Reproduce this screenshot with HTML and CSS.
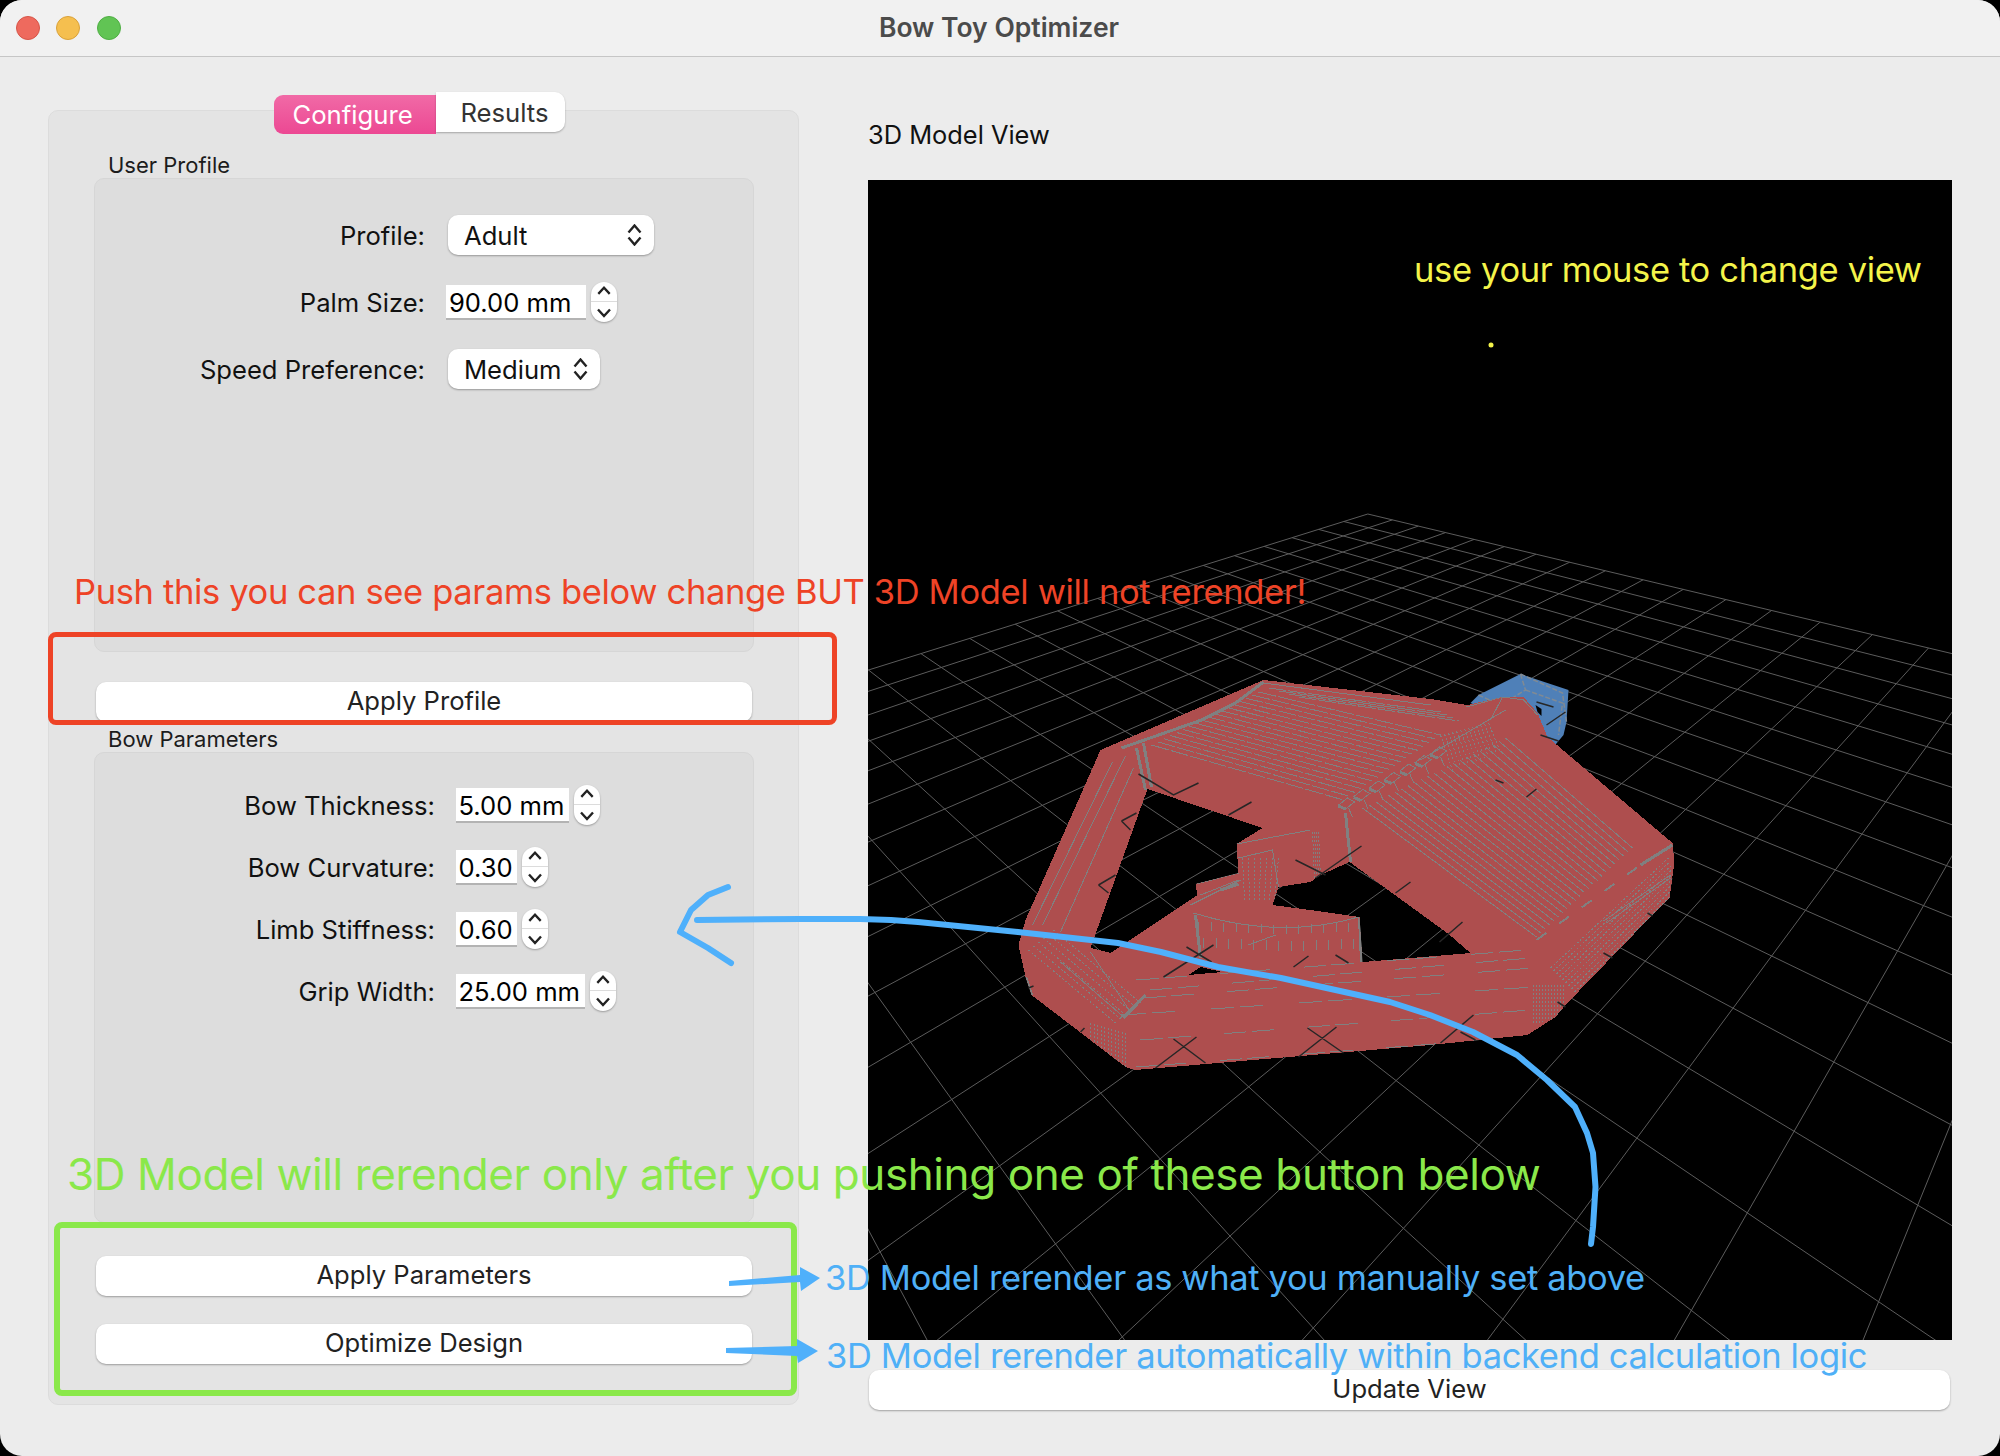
FILE: index.html
```html
<!DOCTYPE html>
<html lang="en">
<head>
<meta charset="utf-8">
<title>Bow Toy Optimizer</title>
<link rel="stylesheet" href="styles.css">
</head>
<body>
<div class="window">
  <header class="titlebar">
    <div class="lights"><i class="light red"></i><i class="light amber"></i><i class="light green"></i></div>
    <div class="title">Bow Toy Optimizer</div>
    <div></div>
  </header>
  <main class="content">
    <section class="left">
      <div class="tabs"><div class="tab tab-on">Configure</div><div class="tab tab-off">Results</div></div>
      <div class="pane">
        <div class="group-title">User Profile</div>
        <div class="group group-profile">
          <div class="form form-a">
            <label>Profile:</label>
            <div class="combo combo-wide"><span>Adult</span><svg class="updown" viewBox="0 0 15 22"><path d="M1.500 8.500 7.500 1.500 13.500 8.500M1.500 13.500 7.500 20.500 13.500 13.500"/></svg></div>
            <label>Palm Size:</label>
            <div class="spin"><div class="input w-palm">90.00 mm</div><div class="stepper"><svg viewBox="0 0 26 20"><path d="M7 12.500 13 6 19 12.500"/></svg><svg viewBox="0 0 26 20"><path d="M7 7.500 13 14 19 7.500"/></svg></div></div>
            <label>Speed Preference:</label>
            <div class="combo combo-narrow"><span>Medium</span><svg class="updown" viewBox="0 0 15 22"><path d="M1.500 8.500 7.500 1.500 13.500 8.500M1.500 13.500 7.500 20.500 13.500 13.500"/></svg></div>
          </div>
        </div>
        <button class="btn btn-profile">Apply Profile</button>
        <div class="group-title title-bow">Bow Parameters</div>
        <div class="group group-bow">
          <div class="form form-b">
            <label>Bow Thickness:</label>
            <div class="spin"><div class="input w-thick">5.00 mm</div><div class="stepper"><svg viewBox="0 0 26 20"><path d="M7 12.500 13 6 19 12.500"/></svg><svg viewBox="0 0 26 20"><path d="M7 7.500 13 14 19 7.500"/></svg></div></div>
            <label>Bow Curvature:</label>
            <div class="spin"><div class="input w-small">0.30</div><div class="stepper"><svg viewBox="0 0 26 20"><path d="M7 12.500 13 6 19 12.500"/></svg><svg viewBox="0 0 26 20"><path d="M7 7.500 13 14 19 7.500"/></svg></div></div>
            <label>Limb Stiffness:</label>
            <div class="spin"><div class="input w-small">0.60</div><div class="stepper"><svg viewBox="0 0 26 20"><path d="M7 12.500 13 6 19 12.500"/></svg><svg viewBox="0 0 26 20"><path d="M7 7.500 13 14 19 7.500"/></svg></div></div>
            <label>Grip Width:</label>
            <div class="spin"><div class="input w-grip">25.00 mm</div><div class="stepper"><svg viewBox="0 0 26 20"><path d="M7 12.500 13 6 19 12.500"/></svg><svg viewBox="0 0 26 20"><path d="M7 7.500 13 14 19 7.500"/></svg></div></div>
          </div>
        </div>
        <button class="btn btn-params">Apply Parameters</button>
        <button class="btn btn-opt">Optimize Design</button>
      </div>
    </section>
    <section class="right">
      <div class="view-title">3D Model View</div>
      <div class="viewport">
        <svg id="scene" class="scene" viewBox="868 180 1083 1160">
          <defs><clipPath id="meshclip"><path id="meshclip-path" clip-rule="evenodd"/></clipPath></defs>
          <path id="grid" class="grid"/>
          <path class="box" d="M1470 703 1478 695 1520 674 1568 690 1566 722 1563 735 1553 747 1530 730Z"/>
          <path class="box-line" d="M1478 695 1500 705M1520 674 1525 690 1500 705M1525 690 1562 703 1558 735M1520 674 1562 693 1566 722"/>
          <path class="notch" d="M1535 705 1541 709 1541 716 1537 712Z"/>
          <path id="mesh" class="mesh"/>
          <g clip-path="url(#meshclip)"><path id="fine" class="fine"/><path id="dash" class="dash"/><path id="dots" class="dots"/><path id="thick" class="thick"/><path id="chunks" class="chunks"/></g>
          <path class="marks" d="M1138 774 1173 795 1198 783M1228 815 1251 802M1121 821 1136 813M1121 821 1130 830M1098 885 1115 875M1098 885 1108 893M1295 860 1325 875M1315 878 1361 846M1163 977 1213 945M1186 947 1211 962M1293 967 1308 956M1335 955 1348 963M1155 1068 1196 1037M1173 1039 1205 1063M1298 1057 1336 1027M1307 1028 1343 1053M1028 988 1033 986M1080 1032 1084 1028M1536 702 1553 707M1546 725 1565 712M1540 735 1558 741M1526 797 1536 789M1647 913 1652 916M1495 780 1503 783M1440 1043 1473 1015M1460 1032 1475 1040M1603 953 1612 958M1557 1002 1565 1007M1410 882 1395 893M1462 922 1439 942"/>
        </svg>
      </div>
      <button class="btn btn-update">Update View</button>
    </section>
  </main>

  <div class="note note-red">Push this you can see params below change BUT 3D Model will not rerender!</div>
  <div class="note note-green">3D Model will rerender only after you pushing one of these button below</div>
  <div class="note note-blue-a">3D Model rerender as what you manually set above</div>
  <div class="note note-blue-b">3D Model rerender automatically within backend calculation logic</div>
  <div class="note note-yellow">use your mouse to change view</div>
  <div class="frame frame-red"></div>
  <div class="frame frame-green"></div>
  <svg class="ink" viewBox="0 0 2000 1456">
    <circle class="ink-dot" cx="1491" cy="345" r="2.500"/>
    <path class="ink-line" d="M1591 1244 1593 1227 1595.500 1187 1593 1153 1587 1133 1575 1107 1547 1080 1517 1055 1473 1032 1430 1015 1390 1002 1281 978 1218 967 1161 952 1118 943 1018 932 918 922 891 920 860 919 800 919 697 920"/>
    <path class="ink-line" d="M728 887 708 895 691 910 680 932 708 948 731 963"/>
    <path class="ink-fill" d="M729 1281 800 1275 800 1267 820 1278 801 1291 800 1282 729 1286Z"/>
    <path class="ink-fill" d="M726 1348 797 1346 797 1339 818 1351 798 1363 797 1356 726 1353Z"/>
  </svg>
</div>
<script src="scene.js"></script>
</body>
</html>
```
FILE: styles.css
```css
* { box-sizing: border-box; }
html, body { margin: 0; padding: 0; background: #000; }
body { width: 2000px; height: 1456px; overflow: hidden; font-family: Inter, "Noto Sans", "Liberation Sans", sans-serif; color: #1c1c1c; }
.window { position: relative; width: 2000px; height: 1456px; background: #ececec; border-radius: 22px; overflow: hidden; display: flex; flex-direction: column; }

.titlebar { flex: none; height: 57px; display: grid; grid-template-columns: 1fr auto 1fr; align-items: center; background: #f1f1f1; border-bottom: 1px solid #c6c6c6; }
.lights { display: flex; gap: 16.500px; padding-left: 15.500px; }
.light { width: 24px; height: 24px; border-radius: 50%; display: block; }
.red { background: #ee6a5e; border: 1px solid #d65548; }
.amber { background: #f5bf4f; border: 1px solid #d9a13a; }
.green { background: #61c454; border: 1px solid #4fae44; }
.title { font-size: 26.500px; font-weight: 600; color: #4b4b4b; transform: translate(-1px, -1px); }

.content { flex: 1; display: flex; min-height: 0; }
.left { width: 799px; padding: 35px 0 0 48px; flex: none; }
.tabs { position: relative; z-index: 1; display: flex; align-items: flex-start; justify-content: center; height: 42px; margin-bottom: -24px; padding-right: 8px; font-size: 25.700px; }
.tab { display: flex; align-items: center; justify-content: center; }
.tab-on { width: 162px; height: 39px; margin-top: 3px; padding-right: 5px; color: #fff; background: linear-gradient(#f16aa6, #ec4893); border-radius: 9px 0 0 9px; }
.tab-off { width: 129px; height: 40px; padding-left: 8px; background: #fff; color: #333; border-radius: 0 10px 10px 0; box-shadow: 0 1px 2px rgba(0,0,0,.28); }
.pane { height: 1295px; padding: 42px 44px 0 45px; background: #e4e4e4; border: 1px solid #dcdcdc; border-radius: 10px; }
.group-title { height: 25px; line-height: 25px; padding-left: 14px; font-size: 22px; color: #1c1c1c; }
.title-bow { margin-top: 5px; }
.group { background: #dddddd; border: 1px solid #d6d6d6; border-radius: 10px; }
.group-profile { height: 474px; padding-top: 36px; }
.group-bow { height: 471px; padding-top: 32px; }
.form { display: grid; align-items: center; justify-items: start; }
.form label { justify-self: end; font-size: 25.600px; color: #111; }
.form-a { grid-template-columns: 330px auto; column-gap: 21px; row-gap: 27px; grid-auto-rows: 40px; }
.form-b { grid-template-columns: 340px auto; column-gap: 20.500px; row-gap: 22px; grid-auto-rows: 40px; }
.combo { display: flex; align-items: center; justify-content: space-between; height: 40px; margin-left: 2px; padding: 0 12px 0 16px; background: #fff; border-radius: 10px; box-shadow: 0 1px 2px rgba(0,0,0,.32); font-size: 25.600px; color: #111; }
.combo-wide { width: 206px; }
.combo-narrow { width: 152px; }
.updown { width: 15px; height: 22px; flex: none; }
.updown path, .stepper path { fill: none; stroke: #222; stroke-width: 2.400; }
.spin { display: flex; align-items: center; gap: 5px; }
.input { height: 35px; line-height: 35px; padding-left: 3px; background: #fff; border-bottom: 2px solid #b3b3b3; font-size: 25.600px; color: #000; white-space: nowrap; }
.w-palm { width: 140px; }
.w-thick { width: 113px; }
.w-small { width: 61px; }
.w-grip { width: 129px; }
.stepper { width: 26px; height: 40px; display: flex; flex-direction: column; background: #fff; border-radius: 13px; box-shadow: 0 1px 2px rgba(0,0,0,.3); overflow: hidden; }
.stepper svg { width: 26px; height: 20px; display: block; }
.stepper svg:first-child { border-bottom: 1px solid #dcdcdc; }

.btn { display: block; height: 40px; padding: 0 0 3px; border: 0; background: #fff; border-radius: 10px; box-shadow: 0 1px 2px rgba(0,0,0,.32); font: inherit; font-size: 25.600px; color: #222; }
.btn-profile { width: 656px; margin: 30px 0 0 2px; }
.btn-params { width: 656px; margin: 33px 0 0 2px; }
.btn-opt { width: 656px; margin: 28px 0 0 2px; }

.right { flex: 1; padding: 63px 48px 0 69px; display: flex; flex-direction: column; }
.view-title { height: 30px; line-height: 30px; margin-bottom: 30px; font-size: 25.400px; color: #111; }
.viewport { height: 1160px; background: #000; overflow: hidden; }
.scene { display: block; width: 100%; height: 100%; }
.btn-update { width: 1081px; margin: 30px 0 0 1px; flex: none; }

.grid { fill: none; stroke: #5c5c5c; stroke-width: 1; }
.box { fill: #4f80b8; }
.box-line { fill: none; stroke: #808a94; stroke-width: 1.500; stroke-dasharray: 5 2; }
.notch { fill: #000; }
.mesh { fill: #ae4e4e; fill-rule: evenodd; shape-rendering: crispEdges; }
.fine { fill: none; stroke: #808080; stroke-width: 1; shape-rendering: crispEdges; }
.dash { fill: none; stroke: #808080; stroke-width: 1; stroke-dasharray: 18 2; shape-rendering: crispEdges; }
.dots { fill: none; stroke: #808080; stroke-width: 1; stroke-dasharray: 2 2; shape-rendering: crispEdges; }
.thick { fill: none; stroke: #808080; stroke-width: 3; shape-rendering: crispEdges; }
.chunks { fill: none; stroke: #808080; stroke-width: 2; stroke-dasharray: 12 16; shape-rendering: crispEdges; }
.marks { fill: none; stroke: #262626; stroke-width: 1.500; }

.note { position: absolute; white-space: nowrap; line-height: 1; }
.note-red { left: 74px; top: 575px; font-size: 34.500px; letter-spacing: -.35px; color: #ee4326; }
.note-green { left: 67px; top: 1152px; font-size: 44px; letter-spacing: -.4px; color: #8ae84a; }
.note-blue-a { left: 825px; top: 1261px; font-size: 34.500px; letter-spacing: -.35px; color: #4fb0f7; }
.note-blue-b { left: 826px; top: 1339px; font-size: 34.500px; letter-spacing: -.35px; color: #4fb0f7; }
.note-yellow { left: 1414px; top: 253px; font-size: 34.500px; letter-spacing: -.35px; color: #f4f44a; }
.frame { position: absolute; border-radius: 8px; }
.frame-red { left: 48px; top: 632px; width: 789px; height: 93px; border: 5px solid #ee4326; }
.frame-green { left: 54px; top: 1222px; width: 743px; height: 174px; border: 6px solid #8ae84a; }
.ink { position: absolute; left: 0; top: 0; width: 2000px; height: 1456px; pointer-events: none; }
.ink-dot { fill: #f4f44a; }
.ink-line { fill: none; stroke: #4fb0fb; stroke-width: 6; stroke-linecap: round; stroke-linejoin: round; }
.ink-fill { fill: #4fb0fb; }
```
FILE: scene.js
```js
// Floor grid: a projective map of the unit square, fitted to four grid corners.
var Q = [[1367.3, 514], [1928, 648], [1478.3, 1145], [868, 670]], NU = 15, NV = 14;
var dx1 = Q[1][0] - Q[2][0], dx2 = Q[3][0] - Q[2][0], dx3 = Q[0][0] - Q[1][0] + Q[2][0] - Q[3][0];
var dy1 = Q[1][1] - Q[2][1], dy2 = Q[3][1] - Q[2][1], dy3 = Q[0][1] - Q[1][1] + Q[2][1] - Q[3][1];
var det = dx1 * dy2 - dx2 * dy1;
var g = (dx3 * dy2 - dx2 * dy3) / det, h = (dx1 * dy3 - dx3 * dy1) / det;
var a = Q[1][0] - Q[0][0] + g * Q[1][0], b = Q[3][0] - Q[0][0] + h * Q[3][0];
var d = Q[1][1] - Q[0][1] + g * Q[1][1], e = Q[3][1] - Q[0][1] + h * Q[3][1];
function W(u, v) { return g * u / NU + h * v / NV + 1; }
function P(u, v) {
  var s = u / NU, t = v / NV, w = W(u, v);
  return ((a * s + b * t + Q[0][0]) / w).toFixed(1) + ' ' + ((d * s + e * t + Q[0][1]) / w).toFixed(1);
}
var grid = '', MAX = 40;
for (var i = 0; i <= MAX; i++) {
  var uEnd = MAX, vEnd = MAX;
  while (uEnd > 0 && W(uEnd, i) < 0.12) uEnd -= 0.25;
  while (vEnd > 0 && W(i, vEnd) < 0.12) vEnd -= 0.25;
  if (W(0, i) > 0.12) grid += 'M' + P(0, i) + ' ' + P(uEnd, i);
  if (W(i, 0) > 0.12) grid += 'M' + P(i, 0) + ' ' + P(i, vEnd);
}
document.getElementById('grid').setAttribute('d', grid);

// Printed toy bow: outline with its two openings, then the slicer's grey wireframe.
var mesh = 'M1100 750 1263 680 1430 699 1467 705 1502 697 1523 697 1537 713 1547 737 1672 843 1674 862 1669 898 1647 920 1565 1005 1555 1017 1527 1035 1430 1045 1135 1070 1125 1067 1031 995 1025 977 1018 945 1025 920Z' +
  'M1147 789 1262 828 1236 844 1238 873 1195 884 1197 895 1110 953 1090 948 1100 920Z' +
  'M1349 862 1448 934 1470 953 1362 962 1359 917 1317 911 1272 905 1278 887 1310 882 1320 875Z' +
  'M1188 975 1200 967 1222 972Z';
document.getElementById('mesh').setAttribute('d', mesh);
document.getElementById('meshclip-path').setAttribute('d', mesh);

function lerp(p, q, t) { return [p[0] + (q[0] - p[0]) * t, p[1] + (q[1] - p[1]) * t]; }
function seg(p, q) { return 'M' + p[0].toFixed(1) + ' ' + p[1].toFixed(1) + ' ' + q[0].toFixed(1) + ' ' + q[1].toFixed(1); }
var fine = '', dash = '', dots = '', thick = '', chunks = '', n;

// Stripes on the two top faces
for (n = 0; n <= 17; n++) dash += seg(lerp([1151, 745], [1258, 692], n / 17), lerp([1343, 800], [1440, 735], n / 17));
for (n = 0; n <= 3; n++) dash += seg([1268 + n * 10, 688 + n * 3], [1440 + n * 6, 712 + n * 3]);
for (n = 0; n <= 22; n++) fine += seg(lerp([1362, 808], [1505, 738], n / 22), lerp([1536, 937], [1632, 848], n / 22));

// Toothed ridge between the faces
for (n = 0; n < 7; n++) {
  var c = lerp([1345, 803], [1437, 752], n / 6), x = c[0], y = c[1];
  fine += 'M' + (x - 7) + ' ' + (y + 2) + ' ' + (x + 2) + ' ' + (y - 5) + ' ' + (x + 9) + ' ' + (y - 1) + ' ' + x + ' ' + (y + 6) + 'Z';
  thick += 'M' + (x - 7) + ' ' + (y + 3) + ' ' + x + ' ' + (y + 6);
  fine += 'M' + (x + 3) + ' ' + (y + 5) + ' ' + (x + 7) + ' ' + (y + 14);
}

// Outer ridges and pillars
thick += 'M1121 748 1201 720 1235 703 1263 682M1136 748 1145 790M1143 743 1151 787M1345 813 1350 862M1123 1018 1145 995M1025 977 1031 995M1640 865 1672 845';
chunks += 'M1536 940 1640 865';
fine += 'M1125 756 1042 925M1112 762 1032 925M1133 768 1060 932M1263 683 1430 705M1466 707 1502 697 1523 700 1537 715M1502 697 1490 720M1420 760 1505 710';
fine += 'M1140 1000 1120 1018M1122 1016 1060 962M1090 952 1130 1012M1248 945 1275 935';

// Dashed lengthwise lines on the front rail
var rails = [[[1136, 980], [1526, 950]], [[1143, 998], [1533, 968]], [[1122, 1015], [1533, 987]], [[1136, 1067], [1524, 1037]], [[1140, 1040], [1530, 1010]], [[1150, 990], [1530, 958]]];
rails.forEach(function (r) {
  for (var k = 0; k < 14; k++) if (k % 3 !== 2) fine += seg(lerp(r[0], r[1], k / 14), lerp(r[0], r[1], (k + 0.8) / 14));
});

// Dotted bands on the bevels and the right rail
for (n = 0; n <= 5; n++) dots += seg([1028 + n * 5, 950 - n * 4], [1115 + n * 5, 1023 - n * 4]);
for (n = 0; n <= 10; n++) dots += seg([1090 + n * 3.5, 1023 + n], [1090 + n * 3.5, 1060 + n]);
for (n = 0; n <= 10; n++) dots += seg([1533 + n * 3, 985], [1533 + n * 3, 1025 - n]);
for (n = 0; n <= 8; n++) dots += seg([1550 + n * 3, 968 + n * 3], [1668 + n * 1, 858 + n * 4]);
fine += 'M1603 921 1670 875M1606 923 1670 878';
for (n = 0; n <= 12; n++) dots += seg([1440 + n * 4, 735 - n], [1452 + n * 4, 770 - n * 1.5]);

// Grip block and arc: short vertical dashes
for (n = 0; n <= 13; n++) {
  var vx = 1198 + n * 12.5, vy = 925 + Math.abs(n - 7) * -0.5;
  fine += 'M' + vx + ' ' + vy + ' ' + vx + ' ' + (vy + 9) + 'M' + (vx + 5) + ' ' + (vy + 16) + ' ' + (vx + 5) + ' ' + (vy + 26);
}
fine += 'M1193 913Q1280 940 1358 917M1190 905 1240 880M1360 916 1361 962';
thick += 'M1195 915 1200 958M1359 918 1361 962';
for (n = 0; n <= 6; n++) dots += seg([1242 + n * 6, 858], [1244 + n * 5, 900]);
for (n = 0; n <= 3; n++) dots += seg([1312 + n * 2, 832], [1314 + n * 2, 880]);
fine += 'M1236 844 1310 830M1238 858 1272 850 1278 887M1196 884 1238 873M1200 895 1238 880';
thick += 'M1220 890 1238 884';

document.getElementById('fine').setAttribute('d', fine);
document.getElementById('dash').setAttribute('d', dash);
document.getElementById('dots').setAttribute('d', dots);
document.getElementById('thick').setAttribute('d', thick);
document.getElementById('chunks').setAttribute('d', chunks);
```
